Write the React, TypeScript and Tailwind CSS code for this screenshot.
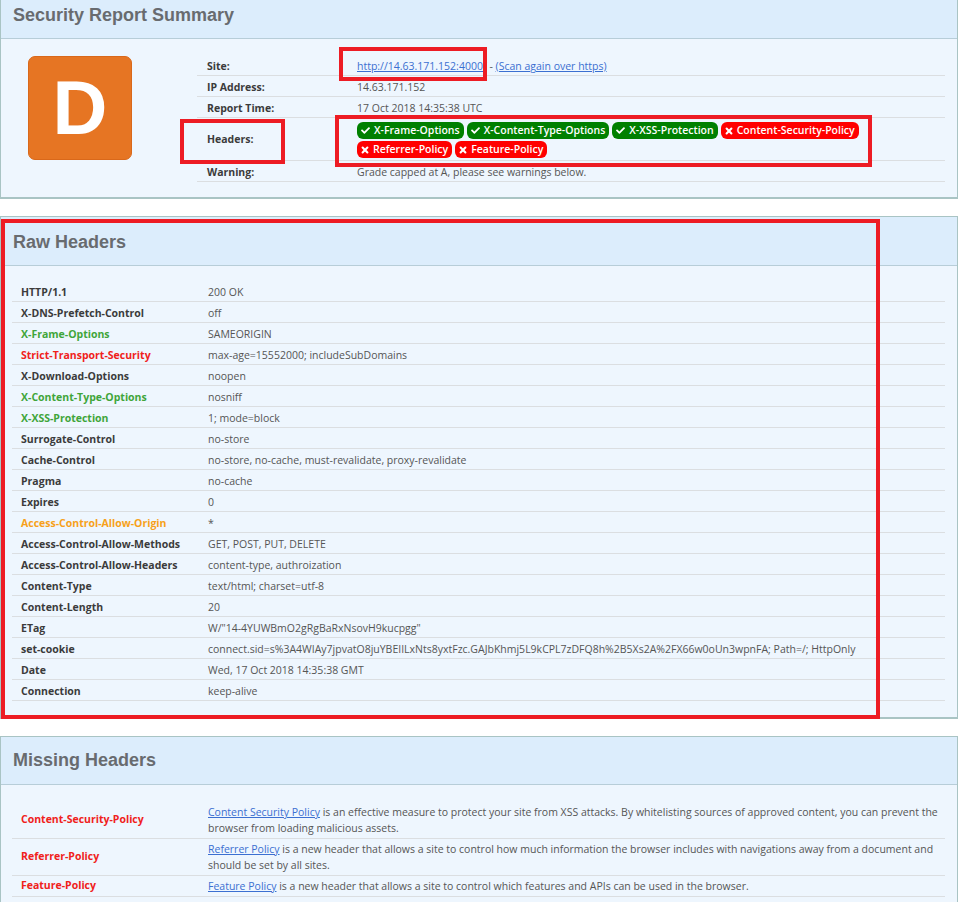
import React from "react";
import { FaCheck } from "react-icons/fa";

interface HeaderRow {
  name: string;
  value: string;
  tone?: "good" | "bad" | "warn";
}

const rawHeaders: HeaderRow[] = [
  { name: "HTTP/1.1", value: "200 OK" },
  { name: "X-DNS-Prefetch-Control", value: "off" },
  { name: "X-Frame-Options", value: "SAMEORIGIN", tone: "good" },
  { name: "Strict-Transport-Security", value: "max-age=15552000; includeSubDomains", tone: "bad" },
  { name: "X-Download-Options", value: "noopen" },
  { name: "X-Content-Type-Options", value: "nosniff", tone: "good" },
  { name: "X-XSS-Protection", value: "1; mode=block", tone: "good" },
  { name: "Surrogate-Control", value: "no-store" },
  { name: "Cache-Control", value: "no-store, no-cache, must-revalidate, proxy-revalidate" },
  { name: "Pragma", value: "no-cache" },
  { name: "Expires", value: "0" },
  { name: "Access-Control-Allow-Origin", value: "*", tone: "warn" },
  { name: "Access-Control-Allow-Methods", value: "GET, POST, PUT, DELETE" },
  { name: "Access-Control-Allow-Headers", value: "content-type, authroization" },
  { name: "Content-Type", value: "text/html; charset=utf-8" },
  { name: "Content-Length", value: "20" },
  { name: "ETag", value: 'W/"14-4YUWBmO2gRgBaRxNsovH9kucpgg"' },
  {
    name: "set-cookie",
    value:
      "connect.sid=s%3A4WIAy7jpvatO8juYBEIILxNts8yxtFzc.GAJbKhmj5L9kCPL7zDFQ8h%2B5Xs2A%2FX66w0oUn3wpnFA; Path=/; HttpOnly",
  },
  { name: "Date", value: "Wed, 17 Oct 2018 14:35:38 GMT" },
  { name: "Connection", value: "keep-alive" },
];

const badges = [
  { label: "X-Frame-Options", ok: true },
  { label: "X-Content-Type-Options", ok: true },
  { label: "X-XSS-Protection", ok: true },
  { label: "Content-Security-Policy", ok: false },
  { label: "Referrer-Policy", ok: false },
  { label: "Feature-Policy", ok: false },
];

const missing = [
  {
    name: "Content-Security-Policy",
    link: "Content Security Policy",
    text: " is an effective measure to protect your site from XSS attacks. By whitelisting sources of approved content, you can prevent the browser from loading malicious assets.",
  },
  {
    name: "Referrer-Policy",
    link: "Referrer Policy",
    text: " is a new header that allows a site to control how much information the browser includes with navigations away from a document and should be set by all sites.",
  },
  {
    name: "Feature-Policy",
    link: "Feature Policy",
    text: " is a new header that allows a site to control which features and APIs can be used in the browser.",
  },
];

const toneClass = (tone?: HeaderRow["tone"]) => {
  if (tone === "good") return "text-[#3fa53a]";
  if (tone === "bad") return "text-[#f0211b]";
  if (tone === "warn") return "text-[#f7a11a]";
  return "text-[#3b3b3b]";
};

// heavy "times" mark like the font-awesome one in the badges
const Cross = () => (
  <svg viewBox="0 0 10 10" className="w-[8px] h-[8px]">
    <path d="M2 2 L8 8 M8 2 L2 8" stroke="white" strokeWidth="2.6" strokeLinecap="round" />
  </svg>
);

const Panel: React.FC<{
  title: string;
  className?: string;
  headerClass?: string;
  children: React.ReactNode;
}> = ({ title, className, headerClass, children }) => (
  <section className={"border border-b-2 border-[#a9c4c4] " + (className ?? "")}>
    <div
      className={
        "bg-[#dcedfc] border-b border-[#b7cdd8] flex items-center px-[12px] " +
        (headerClass ?? "h-[49px] pt-[2px]")
      }
    >
      <h2 className="font-['Liberation_Sans',Arial,sans-serif] font-bold text-[18px] text-[#686b6f]">
        {title}
      </h2>
    </div>
    <div className="bg-[#eef6fe]">{children}</div>
  </section>
);

const rowCls = "flex h-[21px] pt-[4px] items-center border-b border-[#dbdee1]";

const Summary: React.FC = () => (
  <div className="flex pt-[16px] pb-[15px] pr-[12px]">
    <div className="w-[196px] shrink-0 pl-[27px] pt-[1px]">
      <div className="w-[104px] h-[104px] rounded-[7px] bg-[#e67523] border border-[#d9681a] flex items-center justify-center">
        <span className="font-['Liberation_Sans',Arial,sans-serif] font-bold text-[76px] text-white leading-none">
          D
        </span>
      </div>
    </div>
    <div className="flex-1 text-[10.5px]">
      <div className={rowCls}>
        <div className="w-[160px] pl-[10px] font-bold text-[#3b3b3b]">Site:</div>
        <div className="text-[#555]">
          <a className="text-[#3b6fd1] underline">http://14.63.171.152:4000/</a>
          <span> - </span>
          <a className="text-[#3b6fd1] underline">(Scan again over https)</a>
        </div>
      </div>
      <div className={rowCls}>
        <div className="w-[160px] pl-[10px] font-bold text-[#3b3b3b]">IP Address:</div>
        <div className="text-[#555]">14.63.171.152</div>
      </div>
      <div className={rowCls}>
        <div className="w-[160px] pl-[10px] font-bold text-[#3b3b3b]">Report Time:</div>
        <div className="text-[#555]">17 Oct 2018 14:35:38 UTC</div>
      </div>
      <div className="flex h-[43px] pt-[2px] items-center border-b border-[#dbdee1]">
        <div className="w-[160px] shrink-0 pl-[10px] font-bold text-[#3b3b3b]">Headers:</div>
        <div className="flex flex-wrap gap-x-[3px] gap-y-[2px] w-[512px]">
          {badges.map((b) => (
            <span
              key={b.label}
              className={
                "h-[17px] px-[4px] rounded-[6px] flex items-center gap-[4px] text-white font-semibold text-[10.5px] " +
                (b.ok ? "bg-[#008000]" : "bg-[#ff0000]")
              }
            >
              {b.ok ? <FaCheck className="w-[9px] h-[9px]" /> : <Cross />}
              {b.label}
            </span>
          ))}
        </div>
      </div>
      <div className={rowCls}>
        <div className="w-[160px] pl-[10px] font-bold text-[#3b3b3b]">Warning:</div>
        <div className="text-[#555]">Grade capped at A, please see warnings below.</div>
      </div>
    </div>
  </div>
);

const RawHeaders: React.FC = () => (
  <div className="pt-[15px] pb-[16px] pl-[11px] pr-[12px] text-[10.5px]">
    {rawHeaders.map((h) => (
      <div key={h.name} className={rowCls}>
        <div className={"w-[196px] shrink-0 pl-[9px] font-bold " + toneClass(h.tone)}>{h.name}</div>
        <div className="text-[#555] whitespace-nowrap">{h.value}</div>
      </div>
    ))}
  </div>
);

const MissingHeaders: React.FC = () => (
  <div className="pt-[17px] pb-[16px] pl-[11px] pr-[12px] text-[10.5px]">
    {missing.map((m) => (
      <div key={m.name} className="flex items-center min-h-[21px] border-b border-[#dbdee1] py-[2px]">
        <div className="w-[196px] shrink-0 pl-[9px] font-bold text-[#f0211b]">{m.name}</div>
        <div className="text-[#555] leading-[16px] pr-[4px]">
          <a className="text-[#3b6fd1] underline">{m.link}</a>
          {m.text}
        </div>
      </div>
    ))}
  </div>
);

export default function App() {
  return (
    <div className="relative w-[958px] h-[902px] overflow-hidden bg-white font-['Open_Sans',sans-serif]">
      <Panel title="Security Report Summary" className="-mt-[10px] border-t-0">
        <Summary />
      </Panel>
      <Panel title="Raw Headers" className="mt-[17px]">
        <RawHeaders />
      </Panel>
      <Panel title="Missing Headers" className="mt-[17px]" headerClass="h-[48px]">
        <MissingHeaders />
      </Panel>

      {/* annotation boxes drawn over the screenshot */}
      <div className="absolute left-[339px] top-[47px] w-[148px] h-[34px] border-[4px] border-[#ed1c24]" />
      <div className="absolute left-[180px] top-[119px] w-[105px] h-[45px] border-[4px] border-[#ed1c24]" />
      <div className="absolute left-[335px] top-[115px] w-[537px] h-[52px] border-[4px] border-[#ed1c24]" />
      <div className="absolute left-[1px] top-[219px] w-[879px] h-[500px] border-[4px] border-[#ed1c24]" />
    </div>
  );
}
